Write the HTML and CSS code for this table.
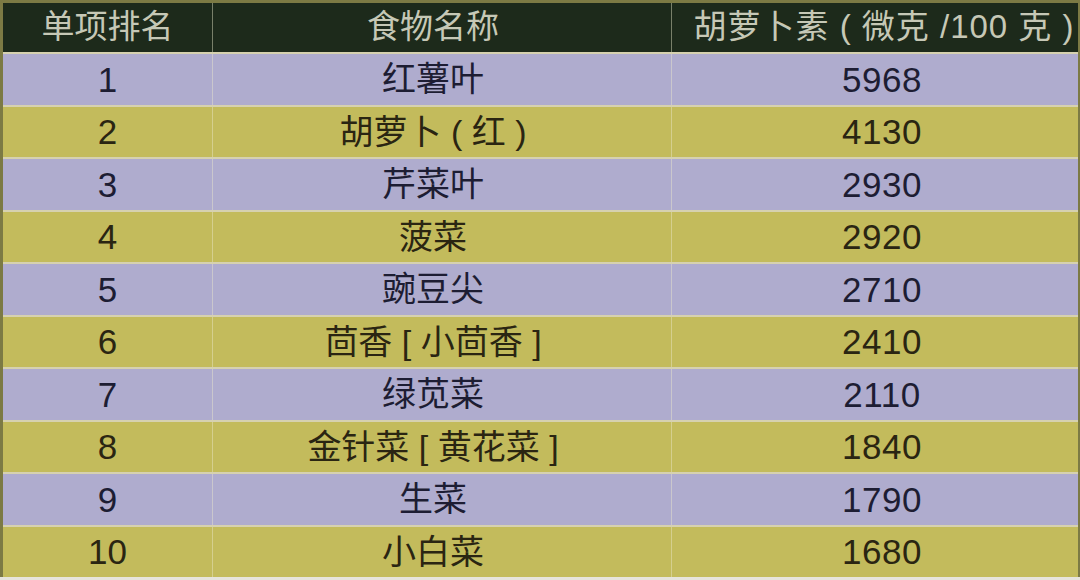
FILE: index.html
```html
<!DOCTYPE html>
<html lang="zh-CN">
<head>
<meta charset="utf-8">
<title>胡萝卜素含量排名</title>
<link rel="stylesheet" href="styles.css">
</head>
<body>
<div class="sheet">
  <div class="table">
    <div class="row head">
      <div class="cell">单项排名</div>
      <div class="cell name">食物名称</div>
      <div class="cell val">胡萝卜素 ( 微克 /100 克 )</div>
    </div>
    <div class="row lav"><div class="cell num">1</div><div class="cell name">红薯叶</div><div class="cell val num">5968</div></div>
    <div class="row yel"><div class="cell num">2</div><div class="cell name">胡萝卜 ( 红 )</div><div class="cell val num">4130</div></div>
    <div class="row lav"><div class="cell num">3</div><div class="cell name">芹菜叶</div><div class="cell val num">2930</div></div>
    <div class="row yel"><div class="cell num">4</div><div class="cell name">菠菜</div><div class="cell val num">2920</div></div>
    <div class="row lav"><div class="cell num">5</div><div class="cell name">豌豆尖</div><div class="cell val num">2710</div></div>
    <div class="row yel"><div class="cell num">6</div><div class="cell name">茴香 [ 小茴香 ]</div><div class="cell val num">2410</div></div>
    <div class="row lav"><div class="cell num">7</div><div class="cell name">绿苋菜</div><div class="cell val num">2110</div></div>
    <div class="row yel"><div class="cell num">8</div><div class="cell name">金针菜 [ 黄花菜 ]</div><div class="cell val num">1840</div></div>
    <div class="row lav"><div class="cell num">9</div><div class="cell name">生菜</div><div class="cell val num">1790</div></div>
    <div class="row yel"><div class="cell num">10</div><div class="cell name">小白菜</div><div class="cell val num">1680</div></div>
  </div>
</div>
</body>
</html>
```
FILE: styles.css
```css
html, body {
  margin: 0;
  padding: 0;
  background: #e6e4dc;
}
body {
  width: 1080px;
  height: 580px;
  overflow: hidden;
  font-family: "Liberation Sans", "Noto Sans CJK SC", sans-serif;
}
.sheet {
  height: 577px;
  background: #7c7a44;
  padding: 3px 2px 0 3px;
  box-sizing: border-box;
}
.table {
  height: 100%;
  display: flex;
  flex-direction: column;
  gap: 2px;
  background: #d6d1b0;
}
.row {
  flex: 1;
  display: grid;
  grid-template-columns: 209px 459px 1fr;
  align-items: stretch;
}
.row.head {
  flex: 0 0 49px;
  background: #1d2a1b;
  color: #c6c8b6;
}
.row.lav {
  background: #afacce;
  color: #1d1d33;
}
.row.yel {
  background: #c3bb5c;
  color: #2a2512;
}
.cell {
  display: flex;
  align-items: center;
  justify-content: center;
  font-size: 34px;
  line-height: 1;
  white-space: nowrap;
}
.cell + .cell {
  border-left: 1px solid rgba(235, 232, 205, 0.45);
}
.head .cell {
  font-size: 33px;
  padding-bottom: 2px;
}
.cell.name {
  padding-right: 18px;
}
.cell.val {
  padding-left: 14px;
  letter-spacing: 0.5px;
}
.head .cell.val {
  letter-spacing: 1px;
  padding-left: 18px;
}
.cell.num {
  font-size: 35px;
}
```
